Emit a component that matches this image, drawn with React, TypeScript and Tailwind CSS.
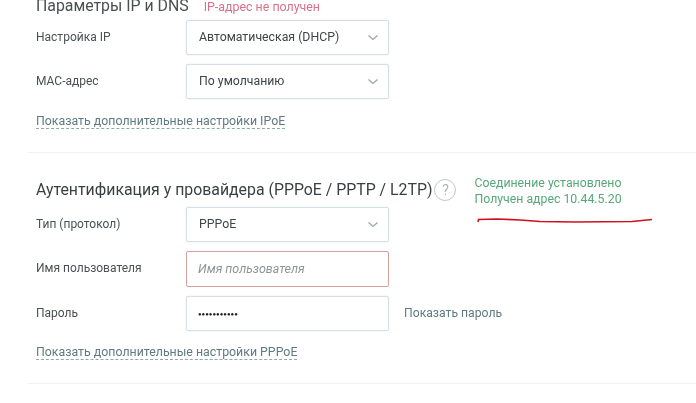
import React from "react";

function Chevron() {
  return (
    <svg width="12" height="8" viewBox="0 0 12 8" fill="none" className="absolute right-[9px] top-[13px]">
      <path d="M1.500 1.500 L6 5.500 L10.500 1.500" stroke="#9aa5ad" strokeWidth="1.3" />
    </svg>
  );
}

function Row({ label, children, extra, className }: { label: string; children: React.ReactNode; extra?: React.ReactNode; className?: string }) {
  return (
    <div className={"flex items-center " + (className ?? "")}>
      <div className="w-[150px] text-[12px] text-[#4a5054] leading-4 -translate-y-[1px]">{label}</div>
      {children}
      {extra}
    </div>
  );
}

function Select({ value }: { value: string }) {
  return (
    <div className="relative w-[203px] h-[35px] bg-white border border-[#d5e0e6] rounded-[2px] shadow-[0_0_2px_#dfe8ec] flex items-center pl-[12px] text-[12.3px] text-[#3f4448]">
      {value}
      <Chevron />
    </div>
  );
}

function Link({ children }: { children: React.ReactNode }) {
  return (
    <span className="text-[12.35px] leading-4 text-[#5f7a80] border-b border-dashed border-[#8fa8ac]">{children}</span>
  );
}

export default function App() {
  return (
    <div className="relative w-[696px] h-[403px] overflow-hidden bg-white font-['Roboto',sans-serif] blur-[0.35px]">
      <div className="pl-[36px] -mt-[4px]">
        <div className="flex items-baseline h-[24px] gap-[15px]">
          <span className="text-[15.85px] leading-5 text-[#4a4f52]">Параметры IP и DNS</span>
          <span className="text-[12.4px] leading-5 text-[#d9708c]">IP-адрес не получен</span>
        </div>
        <Row label="Настройка IP">
          <Select value="Автоматическая (DHCP)" />
        </Row>
        <Row label="MAC-адрес" className="mt-[9px]">
          <Select value="По умолчанию" />
        </Row>
        <div className="mt-[9px] h-[18px]">
          <Link>Показать дополнительные настройки IPoE</Link>
        </div>
      </div>
      <div className="ml-[28px] mt-[26px] h-px bg-[#f0f2f3]" />
      <div className="pl-[36px]">
        <div className="flex items-start h-[54px] pt-[27px]">
          <span className="text-[15.85px] leading-5 text-[#3a3f42]">Аутентификация у провайдера (PPPoE / PPTP / L2TP)</span>
          <span className="ml-[2px] -mt-[1px] w-[22px] h-[22px] rounded-full border border-[#c4c8ca] text-[#b0b4b6] flex items-center justify-center text-[14px] leading-none">?</span>
          <div className="ml-[18px] -mt-[4px] text-[12.3px] leading-[15.5px] text-[#56a878]">
            <div>Соединение установлено</div>
            <div>Получен адрес 10.44.5.20</div>
          </div>
        </div>
        <Row label="Тип (протокол)">
          <Select value="PPPoE" />
        </Row>
        <Row label="Имя пользователя" className="mt-[9px]">
          <div className="w-[203px] h-[36px] bg-white border border-[#d3a0a0] rounded-[2px] flex items-center pl-[11px] text-[12.5px] italic text-[#8e9599]">
            Имя пользователя
          </div>
        </Row>
        <Row
          label="Пароль"
          className="mt-[9px]"
          extra={<span className="ml-[15px] text-[12.2px] text-[#5f7a80]">Показать пароль</span>}
        >
          <div className="w-[203px] h-[35px] bg-white border border-[#d5e0e6] rounded-[2px] shadow-[0_0_2px_#dfe8ec] flex items-center pl-[11px] text-[6px] text-[#222]">
            ●●●●●●●●●●●
          </div>
        </Row>
        <div className="mt-[8px] h-[18px]">
          <Link>Показать дополнительные настройки PPPoE</Link>
        </div>
      </div>
      <div className="ml-[28px] mt-[26px] h-px bg-[#f0f2f3]" />
      <svg width="696" height="403" className="absolute left-0 top-0 pointer-events-none" fill="none">
        <path d="M478 222 L478.500 219.500 L497 219 L520 220 L540 221.500 L575 222 L632 221.500 L652 219.500" stroke="#d0101c" strokeWidth="1.6" />
      </svg>
    </div>
  );
}
